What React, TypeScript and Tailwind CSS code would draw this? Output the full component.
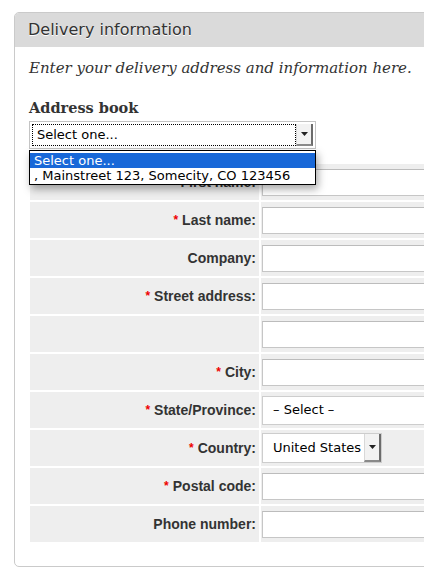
import React from "react";

const rows = [
    { label: "First name:", req: true, kind: "input" },
    { label: "Last name:", req: true, kind: "input" },
    { label: "Company:", req: false, kind: "input" },
    { label: "Street address:", req: true, kind: "input" },
    { label: "", req: false, kind: "input" },
    { label: "City:", req: true, kind: "input" },
    { label: "State/Province:", req: true, kind: "state" },
    { label: "Country:", req: true, kind: "country" },
    { label: "Postal code:", req: true, kind: "input" },
    { label: "Phone number:", req: false, kind: "input" },
];

const ui = "font-['DejaVu_Sans',sans-serif]";

function Arrow() {
    return (
        <div className="w-[17px] h-full flex items-center justify-center bg-[#f2f2f2] border-l border-[#d8d8d8] border-r-2 border-r-[#6b6b6b] border-b-2 border-b-[#8a8a8a]">
            <svg width="7" height="4" viewBox="0 0 7 4">
                <path d="M0 0h7L3.5 4z" fill="#222" />
            </svg>
        </div>
    );
}

export default function App() {
    return (
        <div className="w-[424px] h-[578px] overflow-hidden bg-white pt-3 pl-[14px]">
            <div className="w-[440px] border border-[#cacaca] rounded-[5px] overflow-hidden">
                {/* Header */}
                <div className={`h-[34px] bg-[#dadada] pl-[13px] flex items-center text-[16px] text-[#333] ${ui} [text-shadow:0_1px_0_#fff]`}>
                    Delivery information
                </div>

                <div className="pl-[14px] pt-[10px] pb-[24px]">
                    <p className="font-['DejaVu_Serif',serif] italic text-[15px] leading-[22px] text-[#333]">
                        Enter your delivery address and information here.
                    </p>
                    <h3 className="mt-[18px] font-['DejaVu_Serif',serif] font-bold text-[14.5px] leading-[22px] text-[#333]">
                        Address book
                    </h3>

                    {/* Address book select, open */}
                    <div className="relative mt-[2px] w-[287px] h-[28px] z-10">
                        <div className="h-full flex border border-[#c4c4c4] bg-white p-[2px]">
                            <div className={`flex-1 border border-dotted border-black flex items-center pl-[4px] text-[13px] text-black ${ui}`}>
                                Select one...
                            </div>
                            <Arrow />
                        </div>
                        <div className={`absolute left-0 top-[29px] w-[287px] border border-black bg-white pt-[2px] pb-px shadow-[2px_4px_8px_rgba(0,0,0,0.35)] text-[13px] leading-[15px] ${ui}`}>
                            <div className="bg-[#1868d8] text-white pl-[4px]">Select one...</div>
                            <div className="text-black pl-[4px]">, Mainstreet 123, Somecity, CO 123456</div>
                        </div>
                    </div>

                    {/* Form rows */}
                    <div className="mt-[15px] ml-px flex flex-col gap-[2px]">
                        {rows.map((r, i) => (
                            <div key={i} className="flex gap-[2px] h-[36px]">
                                <div className="w-[229px] bg-[#eeeeee] flex items-center justify-end pr-[3px] font-['Liberation_Sans',sans-serif] font-bold text-[14px] text-[#333]">
                                    {r.req && <span className="text-[#e00] text-[12px] mr-[4px]">*</span>}
                                    {r.label}
                                </div>
                                <div className="flex-1 bg-[#eeeeee] flex items-center pl-px">
                                    {r.kind === "input" && (
                                        <div className="w-full h-[27px] bg-white border border-[#c6c6c6] border-t-[#bcbcbc]" />
                                    )}
                                    {r.kind === "state" && (
                                        <div className={`w-full h-[29px] bg-white border border-[#cdcdcd] flex items-center pl-[10px] text-[13px] text-black ${ui}`}>
                                            – Select –
                                        </div>
                                    )}
                                    {r.kind === "country" && (
                                        <div className="w-[120px] h-[30px] bg-white border border-[#cdcdcd] flex">
                                            <div className={`flex-1 flex items-center pl-[10px] text-[13px] text-black ${ui}`}>
                                                United States
                                            </div>
                                            <Arrow />
                                        </div>
                                    )}
                                </div>
                            </div>
                        ))}
                    </div>
                </div>
            </div>
        </div>
    );
}
